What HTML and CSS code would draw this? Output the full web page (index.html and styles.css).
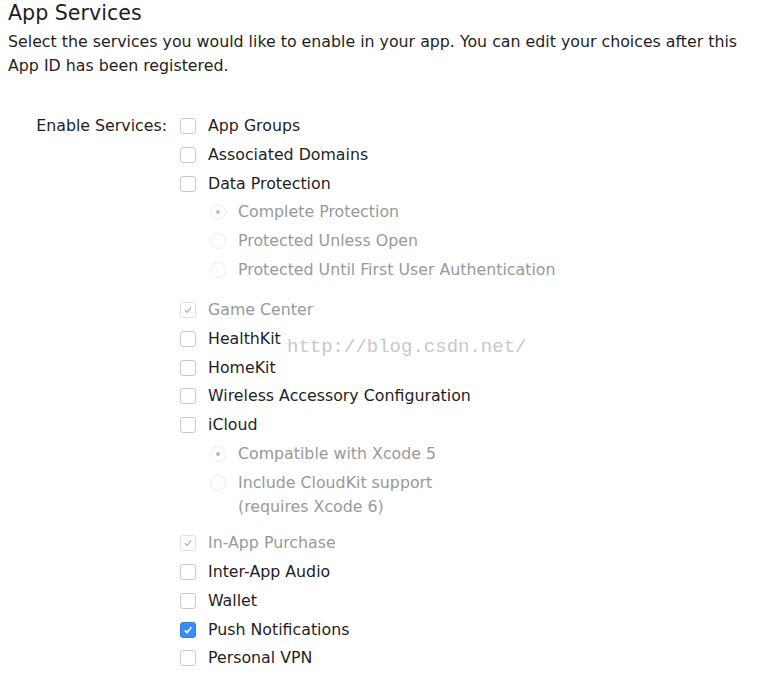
FILE: index.html
```html
<!DOCTYPE html>
<html>
<head>
<meta charset="utf-8">
<link rel="stylesheet" href="styles.css">
</head>
<body>
<div class="page">
  <h1 class="title">App Services</h1>
  <p class="desc">Select the services you would like to enable in your app. You can edit your choices after this App ID has been registered.</p>
  <div class="form">
    <div class="label">Enable Services:</div>
    <div class="options">
      <div class="row"><span class="cb"></span><span class="txt">App Groups</span></div>
      <div class="row"><span class="cb"></span><span class="txt">Associated Domains</span></div>
      <div class="row"><span class="cb"></span><span class="txt">Data Protection</span></div>
      <div class="group g1">
        <div class="row"><span class="rd on"></span><span class="txt dis">Complete Protection</span></div>
        <div class="row"><span class="rd"></span><span class="txt dis">Protected Unless Open</span></div>
        <div class="row"><span class="rd"></span><span class="txt dis">Protected Until First User Authentication</span></div>
      </div>
      <div class="row"><span class="cb dischk"><svg viewBox="0 0 16 16"><path d="M4.5 8.3 L7 10.8 L11.6 5" fill="none" stroke="#aaa" stroke-width="1.3"/></svg></span><span class="txt dis">Game Center</span></div>
      <div class="row"><span class="cb"></span><span class="txt">HealthKit</span></div>
      <div class="row"><span class="cb"></span><span class="txt">HomeKit</span></div>
      <div class="row"><span class="cb"></span><span class="txt">Wireless Accessory Configuration</span></div>
      <div class="row"><span class="cb"></span><span class="txt">iCloud</span></div>
      <div class="group g2">
        <div class="row"><span class="rd on"></span><span class="txt dis">Compatible with Xcode 5</span></div>
        <div class="row"><span class="rd"></span><span class="txt dis">Include CloudKit support<br>(requires Xcode 6)</span></div>
      </div>
      <div class="row"><span class="cb dischk"><svg viewBox="0 0 16 16"><path d="M4.5 8.3 L7 10.8 L11.6 5" fill="none" stroke="#aaa" stroke-width="1.3"/></svg></span><span class="txt dis">In-App Purchase</span></div>
      <div class="row"><span class="cb"></span><span class="txt">Inter-App Audio</span></div>
      <div class="row"><span class="cb"></span><span class="txt">Wallet</span></div>
      <div class="row"><span class="cb checked"><svg viewBox="0 0 16 16"><path d="M4.3 8.4 L7 11 L11.8 4.8" fill="none" stroke="#fff" stroke-width="1.8"/></svg></span><span class="txt">Push Notifications</span></div>
      <div class="row"><span class="cb"></span><span class="txt">Personal VPN</span></div>
    </div>
  </div>
  <div class="watermark">http://blog.csdn.net/</div>
</div>
</body>
</html>
```
FILE: styles.css
```css
html, body { margin: 0; padding: 0; background: #fff; }
.page {
  position: relative;
  padding: 0 8px;
  font-family: "DejaVu Sans", sans-serif;
  color: #1e1e1e;
}
.title {
  margin: 0;
  font-size: 20.6px;
  font-weight: normal;
  line-height: 26px;
  color: #1e1e1e;
}
.desc {
  margin: 4px 0 0 0;
  font-size: 15.8px;
  line-height: 24px;
  width: 745px;
}
.form {
  display: flex;
  margin-top: 36px;
  font-size: 15.8px;
  line-height: 24px;
}
.label {
  width: 159px;
  text-align: right;
  padding-right: 13px;
}
.options { display: flex; flex-direction: column; }
.row {
  display: flex;
  align-items: flex-start;
  margin-bottom: 4.75px;
}
.group { padding-left: 30px; }
.g1 { margin-bottom: 11.5px; }
.g2 { margin-bottom: 8px; }
.cb {
  box-sizing: border-box;
  width: 16px;
  height: 16px;
  margin-top: 4px;
  margin-right: 12px;
  border: 1px solid #c9c9c9;
  border-radius: 3px;
  background: #fff;
  flex: none;
  display: flex;
}
.cb svg { width: 14px; height: 14px; }
.cb.dischk { border-color: #e0e0e0; }
.cb.checked { background: #3b8df5; border-color: #2f7ee6; }
.rd {
  box-sizing: border-box;
  width: 16px;
  height: 16px;
  margin-top: 4px;
  margin-right: 12px;
  border: 1px solid #ececec;
  border-radius: 50%;
  flex: none;
  display: flex;
  align-items: center;
  justify-content: center;
}
.rd.on::after {
  content: "";
  width: 4px;
  height: 4px;
  border-radius: 50%;
  background: #bbb;
}
.txt { white-space: nowrap; }
.txt.dis { color: #999; }
.watermark {
  position: absolute;
  left: 287px;
  top: 336px;
  font-family: "Liberation Mono", monospace;
  font-size: 19px;
  color: #c8c8c8;
}
```
